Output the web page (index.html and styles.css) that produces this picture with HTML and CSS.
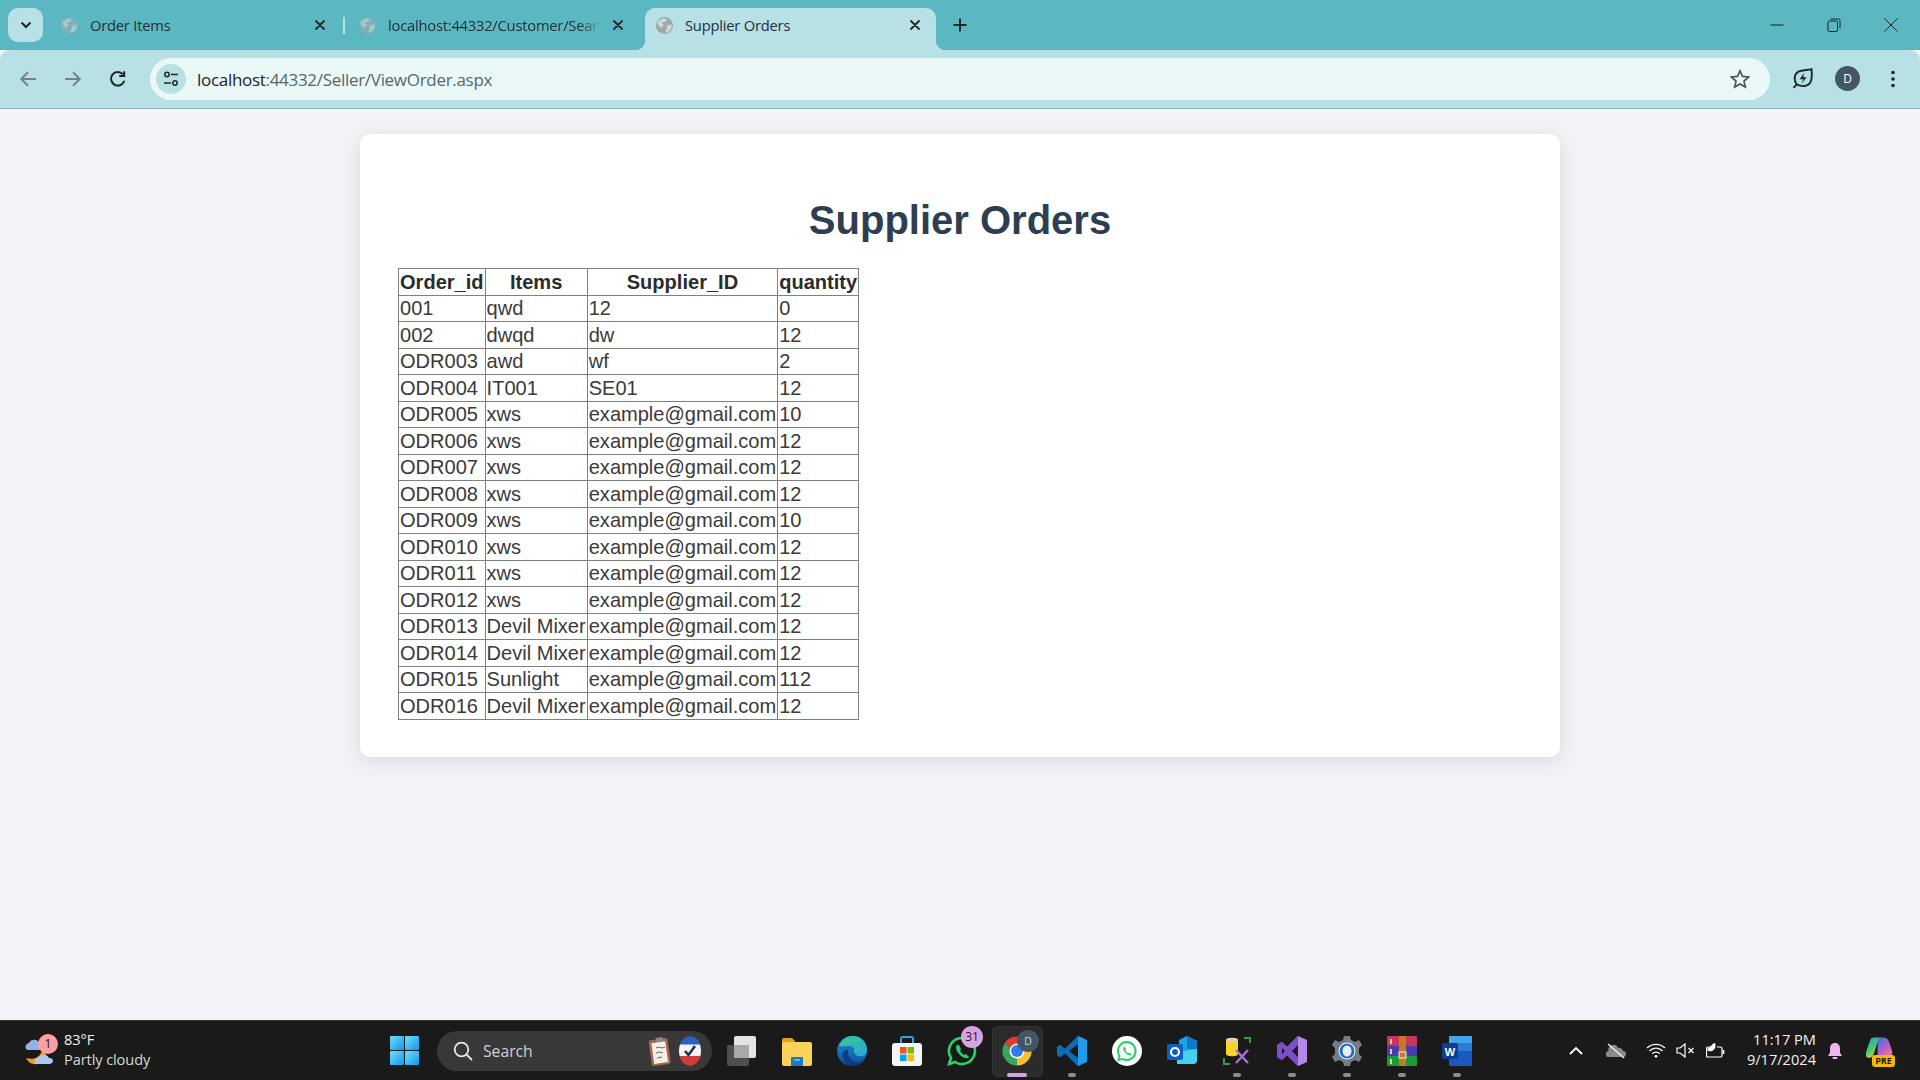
FILE: index.html
```html
<!DOCTYPE html>
<html lang="en">
<head>
<meta charset="utf-8">
<title>Supplier Orders</title>
<link rel="stylesheet" href="styles.css">
</head>
<body>
<svg class="defs" width="0" height="0" aria-hidden="true">
  <symbol id="globe" viewBox="0 0 17 17">
    <circle cx="8.5" cy="8.5" r="8.5" fill="#9ea9ae"/>
    <path d="M3 3.2 7.5 1.2 11 2.4 9 5 5.8 5.6 7.6 8.6 5.6 11 2.4 8.5 1.2 6Z M10.5 8.5 15.8 7.6 15.6 11.5 12.5 15 9 15.6 10.8 11.5Z" fill="#cfd6d9"/>
  </symbol>
  <symbol id="x" viewBox="0 0 10 10">
    <path d="M1 1 9 9M9 1 1 9" stroke="#22282a" stroke-width="1.8" stroke-linecap="round" fill="none"/>
  </symbol>
</svg>

<header class="tabstrip">
  <button class="tab-search"><svg class="chev" viewBox="0 0 12 8"><path d="M1.5 1.5 6 6l4.5-4.5" fill="none" stroke="#1d2729" stroke-width="2"/></svg></button>
  <div class="tab tab-sep">
    <svg class="favicon faded"><use href="#globe"/></svg>
    <span class="tab-title">Order Items</span>
    <svg class="tab-x"><use href="#x"/></svg>
  </div>
  <div class="tab tab-second">
    <svg class="favicon faded"><use href="#globe"/></svg>
    <span class="tab-title fade">localhost:44332/Customer/Sear</span>
    <svg class="tab-x"><use href="#x"/></svg>
  </div>
  <div class="tab active">
    <svg class="favicon"><use href="#globe"/></svg>
    <span class="tab-title">Supplier Orders</span>
    <svg class="tab-x"><use href="#x"/></svg>
  </div>
  <svg class="new-tab" viewBox="0 0 14 14"><path d="M7 0.5v13M0.5 7h13" stroke="#1d2729" stroke-width="1.9" fill="none"/></svg>
  <div class="win-controls">
    <span class="win-btn"><svg viewBox="0 0 14 14"><path d="M0.5 7h13" stroke="#1b2224" stroke-width="1"/></svg></span>
    <span class="win-btn"><svg viewBox="0 0 14 14"><rect x="1" y="3" width="9.5" height="10.5" rx="1.5" fill="none" stroke="#1b2224"/><path d="M3.5 1h8a1.5 1.5 0 0 1 1.5 1.5v8" fill="none" stroke="#1b2224"/></svg></span>
    <span class="win-btn"><svg viewBox="0 0 14 14"><path d="M0.5 0.5l13 13M13.5 0.5l-13 13" stroke="#1b2224" stroke-width="1"/></svg></span>
  </div>
</header>

<nav class="toolbar">
  <span class="tool"><svg viewBox="0 0 16 16"><path d="M15 8H2M8 2 2 8l6 6" fill="none" stroke="#6f8487" stroke-width="1.7"/></svg></span>
  <span class="tool"><svg viewBox="0 0 16 16"><path d="M1 8h13M8 2l6 6-6 6" fill="none" stroke="#6f8487" stroke-width="1.7"/></svg></span>
  <span class="tool"><svg viewBox="0 0 16 16"><path d="M13.6 9.5A6 6 0 1 1 12.3 3.8M13.5 1v4.4H9.1" fill="none" stroke="#1d2729" stroke-width="1.8"/></svg></span>
  <div class="omnibox">
    <span class="site-info"><svg viewBox="0 0 16 16"><circle cx="4" cy="3.5" r="2.2" fill="none" stroke="#1d2729" stroke-width="1.5"/><path d="M8 3.5h7M1 12h7" stroke="#1d2729" stroke-width="1.5"/><circle cx="12" cy="12" r="2.2" fill="none" stroke="#1d2729" stroke-width="1.5"/></svg></span>
    <span class="url"><span class="url-host">localhost</span>:44332/Seller/ViewOrder.aspx</span>
    <svg class="star" viewBox="0 0 20 20"><path d="M10 1.8l2.5 5.6 6.1.6-4.6 4.1 1.3 6-5.3-3.1-5.3 3.1 1.3-6L1.4 8l6.1-.6z" fill="none" stroke="#4c5658" stroke-width="1.7"/></svg>
  </div>
  <div class="tool-right">
    <span class="tool"><svg class="leaf" viewBox="0 0 20 20"><path d="M1.500 19 4.500 15.500C1.500 12 2 6 6 3.500 10 1.500 15 2.200 18.500 1c.5 4 1 9.500-1.200 13-2.500 3.700-8 4.200-12.800 1.500" fill="none" stroke="#1d2729" stroke-width="1.800"/><path d="M11.500 4.500 7.300 10.800h3.600l-2 4.500 5-6.500h-3.200z" fill="#1d2729"/></svg></span>
    <span class="tool"><span class="avatar">D</span></span>
    <span class="tool"><svg class="dots" viewBox="0 0 4 18"><circle cx="2" cy="2.500" r="1.800" fill="#1d2729"/><circle cx="2" cy="9" r="1.800" fill="#1d2729"/><circle cx="2" cy="15.500" r="1.800" fill="#1d2729"/></svg></span>
  </div>
</nav>

<main class="page">
  <section class="card">
    <h1>Supplier Orders</h1>
    <table class="orders">
      <thead><tr><th>Order_id</th><th>Items</th><th>Supplier_ID</th><th>quantity</th></tr></thead>
      <tbody>
        <tr><td>001</td><td>qwd</td><td>12</td><td>0</td></tr>
        <tr><td>002</td><td>dwqd</td><td>dw</td><td>12</td></tr>
        <tr><td>ODR003</td><td>awd</td><td>wf</td><td>2</td></tr>
        <tr><td>ODR004</td><td>IT001</td><td>SE01</td><td>12</td></tr>
        <tr><td>ODR005</td><td>xws</td><td>example@gmail.com</td><td>10</td></tr>
        <tr><td>ODR006</td><td>xws</td><td>example@gmail.com</td><td>12</td></tr>
        <tr><td>ODR007</td><td>xws</td><td>example@gmail.com</td><td>12</td></tr>
        <tr><td>ODR008</td><td>xws</td><td>example@gmail.com</td><td>12</td></tr>
        <tr><td>ODR009</td><td>xws</td><td>example@gmail.com</td><td>10</td></tr>
        <tr><td>ODR010</td><td>xws</td><td>example@gmail.com</td><td>12</td></tr>
        <tr><td>ODR011</td><td>xws</td><td>example@gmail.com</td><td>12</td></tr>
        <tr><td>ODR012</td><td>xws</td><td>example@gmail.com</td><td>12</td></tr>
        <tr><td>ODR013</td><td>Devil Mixer</td><td>example@gmail.com</td><td>12</td></tr>
        <tr><td>ODR014</td><td>Devil Mixer</td><td>example@gmail.com</td><td>12</td></tr>
        <tr><td>ODR015</td><td>Sunlight</td><td>example@gmail.com</td><td>112</td></tr>
        <tr><td>ODR016</td><td>Devil Mixer</td><td>example@gmail.com</td><td>12</td></tr>
      </tbody>
    </table>
  </section>
</main>

<footer class="taskbar">
  <div class="weather">
    <span class="weather-icon">
      <svg viewBox="0 0 30 34"><path d="M20 12c3 8-1 16-8 18C7 31 3 28 1 24c6 2 13 0 15-5 1-2 2-5 4-7z" fill="#f39a1e"/><path d="M1 15a4 4 0 0 1 3-6 6 6 0 0 1 11 1 3 3 0 0 1 0 6H3z" fill="#8fb5e8"/><path d="M10 30a4 4 0 0 1 3-6 6 6 0 0 1 11 0 3.500 3.500 0 0 1 4 3 3.500 3.500 0 0 1-3 3z" fill="#a9c9f2"/></svg>
      <span class="weather-badge">1</span>
    </span>
    <span class="weather-text"><span>83°F</span><span class="weather-desc">Partly cloudy</span></span>
  </div>
  <svg class="start" viewBox="0 0 29 29"><defs><linearGradient id="win" x1="0" y1="0" x2="1" y2="1"><stop offset="0" stop-color="#6fe0f5"/><stop offset="1" stop-color="#1296f0"/></linearGradient></defs><rect width="14" height="14" rx="1" fill="url(#win)"/><rect x="15" width="14" height="14" rx="1" fill="url(#win)"/><rect y="15" width="14" height="14" rx="1" fill="url(#win)"/><rect x="15" y="15" width="14" height="14" rx="1" fill="url(#win)"/></svg>
  <div class="search">
    <svg class="search-glass" viewBox="0 0 20 20"><circle cx="8.500" cy="8.500" r="6.800" fill="none" stroke="#e8e8e8" stroke-width="1.800"/><path d="M13.500 13.500 19 19" stroke="#e8e8e8" stroke-width="1.800"/></svg>
    <span class="search-label">Search</span>
    <svg class="search-pic" viewBox="0 0 24 30"><rect x="2" y="3" width="19" height="26" rx="2" fill="#a5684a" transform="rotate(-8 12 15)"/><rect x="4.500" y="6" width="14" height="21" fill="#f4f0e6" transform="rotate(-8 12 15)"/><path d="M8 12l3-1 3 1 3-1M8 17l4-1 3 1M9 22l5-1" stroke="#666" stroke-width="1" fill="none"/><rect x="8" y="1.500" width="7" height="4" fill="#8b8b8b" transform="rotate(-8 12 4)"/></svg>
    <svg class="search-pic vote" viewBox="0 0 24 30"><ellipse cx="12" cy="15" rx="11" ry="14" fill="#f3f3f3"/><path d="M2 8.500a11 14 0 0 1 20 0z" fill="#2d5fc0"/><path d="M1.500 20h21a11 14 0 0 1-21 0z" fill="#d33a3a"/><path d="M7 15l3.500 4L17 10" fill="none" stroke="#20305a" stroke-width="2.600"/></svg>
  </div>
  <div class="apps">
    <span class="app"><svg viewBox="0 0 30 30"><rect x="0" y="9" width="22" height="21" rx="2" fill="#4f4f4f"/><rect x="7" y="0" width="22" height="22" rx="2" fill="#e4e4e4"/><rect x="7" y="9" width="15" height="13" fill="#a8a8a8"/></svg></span>
    <span class="app"><svg viewBox="0 0 30 30"><path d="M0 4a2 2 0 0 1 2-2h8l3 3v4H0z" fill="#e0a21b"/><rect y="6" width="30" height="24" rx="2" fill="#fbd25c"/><path d="M10 21h10a1 1 0 0 1 1 1v8H9v-8a1 1 0 0 1 1-1z" fill="#1a78c8"/><path d="M12 24h6" stroke="#7cc4ee" stroke-width="1.500"/></svg></span>
    <span class="app"><svg viewBox="0 0 30 30"><defs><linearGradient id="edge1" x1="0" y1="0" x2="1" y2="1"><stop offset="0" stop-color="#38c98f"/><stop offset="1" stop-color="#2aa6dc"/></linearGradient><linearGradient id="edge2" x1="0" y1="0" x2="0" y2="1"><stop offset="0" stop-color="#1a8fd6"/><stop offset="1" stop-color="#0e4f9c"/></linearGradient></defs><circle cx="15" cy="15" r="15" fill="url(#edge2)"/><path d="M2 10C5 2 12 0 16 0c8 0 14 6 14 14 0 6-5 7-9 6-3-1-4-3-4-5 1-3-1-5-5-5-4 0-7 1-10 0z" fill="url(#edge1)"/><path d="M11 14c-1 6 3 11 8 12 3 0 6-2 7-3-3 5-8 7-12 7-6-1-10-8-8-13 1-2 3-4 5-3z" fill="#0b3d85"/></svg></span>
    <span class="app"><svg viewBox="0 0 30 30"><path d="M9 8V3a2 2 0 0 1 2-2h8a2 2 0 0 1 2 2v5" fill="none" stroke="#2aa7e0" stroke-width="2"/><rect y="7" width="30" height="23" rx="3" fill="#f5f5f5"/><rect x="8" y="11" width="6.500" height="6.500" fill="#f25022"/><rect x="15.500" y="11" width="6.500" height="6.500" fill="#7fba00"/><rect x="8" y="18.500" width="6.500" height="6.500" fill="#00a4ef"/><rect x="15.500" y="18.500" width="6.500" height="6.500" fill="#ffb900"/></svg></span>
    <span class="app"><svg viewBox="0 0 30 30"><path d="M15 2a13 13 0 0 0-11 20L2 28l6-2A13 13 0 1 0 15 2z" fill="none" stroke="#25d366" stroke-width="2.600"/><path d="M10 9c-2 2-1 6 3 10s8 4 9 2l-3-3-2 1c-2-1-3-3-4-4l1-2-2-4z" fill="#25d366"/></svg><span class="app-badge">31</span></span>
    <span class="app current"><svg viewBox="0 0 30 30"><path d="M15 15 2.400 7.750A14.500 14.500 0 0 1 27.600 7.750Z" fill="#e53c30"/><path d="M15 15 27.600 7.750A14.500 14.500 0 0 1 15 29.500Z" fill="#fbc02d"/><path d="M15 15 15 29.500A14.500 14.500 0 0 1 2.400 7.750Z" fill="#3aa655"/><circle cx="15" cy="15" r="7.500" fill="#fff"/><circle cx="15" cy="15" r="6" fill="#2f7cf0"/></svg><span class="app-badge profile">D</span><span class="running wide"></span></span>
    <span class="app"><svg viewBox="0 0 30 30"><path d="M21 0 30 4v22l-9 4L8 17l-5 4-3-2v-8l3-2 5 4z" fill="#1f9cf0"/><path d="M21 0 8 13 3 9 0 11v8l3 2 5-4 13 13z" fill="#0d6cb4"/><path d="M21 8v14l-9-7z" fill="#1a1a1a"/></svg><span class="running"></span></span>
    <span class="app"><svg viewBox="0 0 30 30"><circle cx="15" cy="15" r="15" fill="#fff"/><path d="M15 6a9 9 0 0 0-7.500 14L6.500 24l4-1A9 9 0 1 0 15 6z" fill="none" stroke="#25d366" stroke-width="2"/><path d="M12 10.500c-1.500 1-1 4 1.500 6.500s5 3 6 1.500l-2-2-1.500.8c-1-.6-2-1.800-2.700-3l.8-1.300z" fill="#25d366"/></svg></span>
    <span class="app"><svg viewBox="0 0 30 30"><path d="M12 4 20 0l10 5v18a5 5 0 0 1-5 5H12z" fill="#1aa5e8"/><path d="M20 0l10 5v8H20z" fill="#0f78c8"/><path d="M10 16l20-3v11a4 4 0 0 1-4 4H10z" fill="#46d0f0"/><rect y="8" width="16" height="16" rx="2" fill="#0a5fc0"/><circle cx="8" cy="16" r="4" fill="none" stroke="#fff" stroke-width="2.200"/></svg></span>
    <span class="app"><svg viewBox="0 0 30 30"><path d="M4 4c0-3 12-3 12 0v14c0 3-12 3-12 0z" fill="#f6d32d"/><ellipse cx="10" cy="4" rx="6" ry="2" fill="#d8d4c0"/><path d="M22 2h6v5M2 22v6h6" fill="none" stroke="#3b9a47" stroke-width="2"/><path d="M14 14l12 13M26 14 14 27" stroke="#a66fd0" stroke-width="2.500"/></svg><span class="running"></span></span>
    <span class="app"><svg viewBox="0 0 30 30"><path d="M21 0 30 4v22l-9 4L10 19l-5 5-5-3V9l5-3 5 5z" fill="#b388e8"/><path d="M21 0 10 11 5 6 0 9v12l5 3 5-5 11 11z" fill="#7c4fc4"/><path d="M21 9v12l-6-6zM5 12v6l3-3z" fill="#1a1a1a"/></svg><span class="running"></span></span>
    <span class="app"><svg viewBox="0 0 30 30"><path d="M12 0h6l1 4 4 2 4-2 3 5-3 3v6l3 3-3 5-4-2-4 2-1 4h-6l-1-4-4-2-4 2-3-5 3-3v-6L0 9l3-5 4 2 4-2z" fill="#747c84"/><circle cx="15" cy="15" r="8.500" fill="#fff"/><circle cx="15" cy="15" r="7.500" fill="#1d6ad0"/><ellipse cx="15" cy="15" rx="4.500" ry="5.500" fill="#e8eef5"/></svg><span class="running"></span></span>
    <span class="app"><svg viewBox="0 0 30 30"><rect width="30" height="10" y="0" rx="1" fill="#c7355b"/><rect width="30" height="10" y="10" fill="#4a3bb0"/><rect width="30" height="10" y="20" rx="1" fill="#1a9a3c"/><rect x="12" width="7" height="30" fill="#c87a22"/><rect x="12" y="16" width="7" height="6" fill="none" stroke="#f0f0f0"/><path d="M4 3v5M4 13v5M4 23v5" stroke="#f0d36a" stroke-width="2"/></svg><span class="running"></span></span>
    <span class="app"><svg viewBox="0 0 30 30"><rect x="7" width="23" height="30" rx="1" fill="#185abd"/><rect x="7" width="23" height="7.500" fill="#41a5ee"/><rect x="7" y="7.500" width="23" height="7.500" fill="#2b7cd3"/><rect y="7" width="16" height="16" rx="1.500" fill="#103f91"/><text x="8" y="19.500" class="word-w">W</text></svg><span class="running"></span></span>
  </div>
  <div class="tray">
    <span class="tray-item w40"><svg viewBox="0 0 14 9"><path d="M1 8l6-6 6 6" fill="none" stroke="#fff" stroke-width="1.800"/></svg></span>
    <span class="tray-item w40 gapr"><svg class="cloud" viewBox="0 0 20 16"><path d="M3 14a3 3 0 0 1-.5-6A5 5 0 0 1 12 5a4 4 0 0 1 5 3 3 3 0 0 1 0 6z" fill="#8a8a8a"/><path d="M2 1l16 14" stroke="#f0f0f0" stroke-width="1.400"/></svg></span>
    <span class="tray-item"><svg class="wifi" viewBox="0 0 20 15"><path d="M1 5a13 13 0 0 1 18 0M3.500 8a9 9 0 0 1 13 0M6.300 10.800a5 5 0 0 1 7.400 0" fill="none" stroke="#fff" stroke-width="1.300"/><circle cx="10" cy="13.300" r="1.400" fill="#fff"/></svg></span>
    <span class="tray-item"><svg class="wifi" viewBox="0 0 20 15"><path d="M1 5h3l5-4v13l-5-4H1z" fill="none" stroke="#fff" stroke-width="1.200"/><path d="M12.500 5l5 5M17.500 5l-5 5" stroke="#fff" stroke-width="1.200"/></svg></span>
    <span class="tray-item"><svg class="wifi" viewBox="0 0 20 15"><path d="M5 4H2a1.500 1.500 0 0 0-1.500 1.500V13a1 1 0 0 0 1 1h13a1.500 1.500 0 0 0 1.500-1.500V5.500A1.500 1.500 0 0 0 14.500 4H11" fill="none" stroke="#fff" stroke-width="1.200"/><path d="M17.500 7v4" stroke="#fff" stroke-width="1.600"/><path d="M9 0c1 3 1 6-3 8C3 9 1 7 1 7c1-3 3-2 4-4 1-1 2-3 4-3z" fill="#fff"/></svg></span>
    <span class="clock"><span>11:17 PM</span><span>9/17/2024</span></span>
    <span class="bell"><svg viewBox="0 0 16 18"><path d="M8 1C4.500 1 3 3.500 3 7v3.500L1 14h14l-2-3.500V7c0-3.500-1.500-6-5-6z" fill="#edb6ee"/><rect x="5.500" y="15" width="5" height="2" rx="1" fill="#edb6ee"/></svg></span>
    <span class="copilot"><svg viewBox="0 0 29 30"><defs><linearGradient id="cop1" x1="0" y1="0" x2="0.600" y2="1"><stop offset="0" stop-color="#1f9fe8"/><stop offset=".55" stop-color="#48c86a"/><stop offset="1" stop-color="#f0d030"/></linearGradient><linearGradient id="cop2" x1="0" y1="0" x2="0.600" y2="1"><stop offset="0" stop-color="#2f7ce8"/><stop offset=".5" stop-color="#a05fd0"/><stop offset="1" stop-color="#f070a0"/></linearGradient></defs><path d="M8 1h10c-3 0-5 2-6 5l-4 12c-1 3-3 4-5 4-3 0-4-3-3-6L4 5c1-3 2-4 4-4z" fill="url(#cop1)"/><path d="M12 6c1-3 3-5 6-5 3 0 5 2 6 5l3 9c1 3-1 6-4 6H12z" fill="url(#cop2)"/></svg><span class="pre">PRE</span></span>
  </div>
</footer>
</body>
</html>
```

FILE: styles.css
```css
* { box-sizing: border-box; }
html, body { height: 100%; }
body {
  margin: 0;
  display: flex;
  flex-direction: column;
  height: 1080px;
  overflow: hidden;
  background: #f1f3f7;
  font-family: "Liberation Sans", Arial, sans-serif;
}
.defs { display: block; width: 0; height: 0; position: absolute; }

/* tab strip */
.tabstrip {
  height: 50px;
  flex: none;
  background: #5bb8c2;
  display: flex;
  padding: 8px 0 0 8px;
  font-family: "Open Sans", sans-serif;
}
.tab-search {
  width: 35px;
  height: 34px;
  margin: 0 7px 0 0;
  padding: 0;
  border: 0;
  border-radius: 10px;
  background: #b7e1e4;
  display: flex;
  align-items: center;
  justify-content: center;
}
.chev { width: 12px; height: 8px; }
.tab {
  position: relative;
  width: 291px;
  height: 42px;
  display: flex;
  align-items: center;
  padding: 0 13.5px 8px 11px;
  border-radius: 10px 10px 0 0;
  color: #22303a;
}
.tab + .tab { margin-left: 6px; }
.tab.tab-second { margin-left: 7px; }
.tab-sep::after {
  content: "";
  position: absolute;
  right: -4px;
  top: 9px;
  width: 2px;
  height: 17px;
  background: #b7e1e4;
}
.tab.active { background: #b7e1e4; }
.tab.active::before,
.tab.active::after {
  content: "";
  position: absolute;
  bottom: 0;
  width: 10px;
  height: 10px;
}
.tab.active::before { left: -10px; background: radial-gradient(circle at 0 0, #5bb8c2 10px, #b7e1e4 10.5px); }
.tab.active::after { right: -10px; background: radial-gradient(circle at 100% 0, #5bb8c2 10px, #b7e1e4 10.5px); }
.favicon { width: 17px; height: 17px; flex: none; margin-right: 12px; }
.favicon.faded { opacity: .6; }
.tab-title {
  flex: 1;
  min-width: 0;
  white-space: nowrap;
  font-size: 14.7px;
  letter-spacing: -.2px;
}
.tab-title.fade {
  -webkit-mask-image: linear-gradient(to right, #000 90%, transparent 100%);
  mask-image: linear-gradient(to right, #000 90%, transparent 100%);
}
.tab-x { width: 10px; height: 10px; flex: none; margin-left: 12px; margin-right: 3px; }
.new-tab { width: 14px; height: 14px; margin: 10px 0 0 17px; }
.win-controls { margin-left: auto; display: flex; margin-top: -8px; height: 50px; padding-right: 1px; }
.win-btn { width: 57px; height: 50px; display: flex; align-items: center; justify-content: center; }
.win-btn svg { width: 14px; height: 14px; }

/* toolbar */
.toolbar {
  height: 59px;
  flex: none;
  background: #b7e1e4;
  border-bottom: 1px solid #8fb4b8;
  border-radius: 10px 10px 0 0;
  display: flex;
  align-items: center;
  padding: 0 6px 1px 5px;
}
.tool { width: 45px; height: 36px; flex: none; display: flex; align-items: center; justify-content: center; }
.tool > svg { width: 18px; height: 18px; }
.tool > svg.leaf { width: 21px; height: 21px; }
.tool > svg.dots { width: 4px; height: 18px; }
.omnibox {
  flex: 1;
  height: 42px;
  margin-left: 10px;
  border-radius: 21px;
  background: #ebf8f8;
  display: flex;
  align-items: center;
  padding: 0 20px 0 6px;
}
.site-info {
  width: 30px;
  height: 30px;
  border-radius: 50%;
  background: #b7e1e4;
  display: flex;
  align-items: center;
  justify-content: center;
  margin-right: 11px;
}
.site-info svg { width: 16px; height: 16px; }
.url { flex: 1; font-family: "Open Sans", sans-serif; font-size: 17px; letter-spacing: -.3px; color: #55676c; padding-top: 1px; }
.url-host { color: #1b2428; }
.star { width: 20px; height: 20px; }
.tool-right { display: flex; margin-left: 10px; margin-right: -1px; }
.avatar {
  width: 25px;
  height: 25px;
  border-radius: 50%;
  background: #435663;
  color: #fff;
  font: 12px "Open Sans", sans-serif;
  display: flex;
  align-items: center;
  justify-content: center;
}

/* page */
.page { flex: 1; padding-top: 25px; display: flex; flex-direction: column; align-items: center; }
.card {
  width: 1200px;
  padding: 25px 38px 37px;
  background: #fff;
  border-radius: 10px;
  box-shadow: 0 4px 20px rgba(0, 0, 0, .1);
}
.card h1 {
  margin: 38px 0 25px;
  text-align: center;
  font-size: 40px;
  line-height: 46px;
  font-weight: 700;
  color: #2c3e50;
}
.orders {
  border-collapse: collapse;
  font-size: 20.06px;
  color: #3a3a3a;
}
.orders th, .orders td {
  border: 1px solid #808080;
  padding: 1.5px 1px .5px;
  height: 26.5px;
  line-height: 23px;
  white-space: nowrap;
}
.orders th { font-weight: 700; text-align: center; color: #2b2b2b; }

/* taskbar */
.taskbar {
  height: 60px;
  flex: none;
  background: #1a1a1a;
  border-top: 1px solid #333;
  display: flex;
  align-items: center;
  font-family: "Open Sans", sans-serif;
  color: #f2f2f2;
}
.weather { width: 390px; flex: none; display: flex; align-items: center; padding-left: 25px; }
.weather-icon { position: relative; width: 30px; height: 34px; margin-right: 9px; }
.weather-icon svg { width: 30px; height: 34px; display: block; }
.weather-badge {
  position: absolute;
  left: 13px;
  top: 0;
  width: 20px;
  height: 20px;
  border-radius: 50%;
  background: #ff9ea3;
  color: #1a1a1a;
  font-size: 12px;
  line-height: 20px;
  text-align: center;
}
.weather-text { display: flex; flex-direction: column; font-size: 14.6px; line-height: 19.5px; letter-spacing: -.1px; margin-top: -2px; }
.weather-desc { color: #d8d8d8; }
.start { width: 29px; height: 29px; flex: none; }
.search {
  width: 275px;
  height: 40px;
  flex: none;
  margin-left: 18px;
  border-radius: 20px;
  background: #383838;
  display: flex;
  align-items: center;
  padding: 0 10px 0 16px;
}
.search-glass { width: 20px; height: 20px; margin-right: 10px; flex: none; }
.search-label { flex: 1; font-size: 15.7px; color: #d0d0d0; }
.search-pic { width: 24px; height: 30px; flex: none; }
.search-pic.vote { margin-left: 6px; }
.apps { display: flex; margin-left: 2px; flex: none; height: 100%; align-items: center; }
.app {
  position: relative;
  width: 55px;
  height: 49px;
  display: flex;
  align-items: center;
  justify-content: center;
}
.app > svg { width: 30px; height: 30px; }
.app.current::before {
  content: "";
  position: absolute;
  left: 3px;
  top: 0;
  width: 49px;
  height: 49px;
  border-radius: 5px;
  background: #2b2b2b;
  border: 1px solid #333;
}
.app.current > svg { position: relative; }
.app-badge {
  position: absolute;
  left: 27px;
  top: 0;
  width: 22px;
  height: 22px;
  border-radius: 50%;
  background: #d9a3e3;
  color: #1a1a1a;
  font-size: 12px;
  line-height: 22px;
  text-align: center;
}
.app-badge.profile { left: 28px; top: 4px; background: #435663; color: #c7cdd1; font-size: 11px; }
.running {
  position: absolute;
  left: 50%;
  bottom: -2px;
  width: 8px;
  height: 4px;
  margin-left: -4px;
  border-radius: 2px;
  background: #8c8c8c;
}
.running.wide { width: 20px; margin-left: -10px; background: #d9a3e3; }
.word-w { font: 700 11px "Liberation Sans", sans-serif; fill: #fff; text-anchor: middle; }
.tray { margin-left: auto; display: flex; align-items: center; padding-right: 26px; }
.tray-item { width: 30px; height: 30px; flex: none; display: flex; align-items: center; justify-content: center; }
.tray-item.w40 { width: 40px; }
.tray-item.gapr { margin-right: 5px; }
.tray-item svg { width: 14px; height: 9px; }
.tray-item svg.cloud { width: 20px; height: 16px; }
.tray-item svg.wifi { width: 20px; height: 15px; }
.clock {
  width: 85px;
  display: flex;
  flex-direction: column;
  align-items: flex-end;
  font-size: 14.6px;
  line-height: 19.5px;
  margin-top: -2px;
  color: #f2f2f2;
}
.bell { width: 38px; display: flex; justify-content: center; }
.bell svg { width: 16px; height: 18px; }
.copilot { position: relative; width: 28px; height: 30px; margin-left: 12px; }
.copilot svg { width: 28px; height: 30px; display: block; }
.pre {
  position: absolute;
  right: -1px;
  bottom: -1px;
  width: 23px;
  height: 12px;
  border-radius: 3px;
  background: #f6b900;
  color: #1a1a1a;
  font-size: 9px;
  font-weight: 700;
  line-height: 12px;
  text-align: center;
}
```
